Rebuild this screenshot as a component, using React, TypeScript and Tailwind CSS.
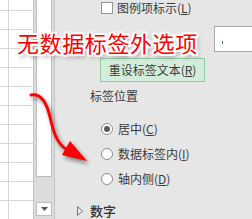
import React from "react";

const rowLines = Array.from({ length: 11 });

function Radio({ checked, children }: { checked?: boolean; children: React.ReactNode }) {
  return (
    <div className="flex items-center h-[20px] pl-[46px] gap-[5px]">
      <span className="w-[12px] h-[12px] rounded-full border border-[#8c8c8c] bg-white flex items-center justify-center">
        {checked && <span className="w-[6px] h-[6px] rounded-full bg-[#5c5c5c]" />}
      </span>
      <span className="text-[12px] leading-[16px] text-[#3c3c3c]">{children}</span>
    </div>
  );
}

export default function App() {
  return (
    <div className="relative w-[252px] h-[219px] overflow-hidden flex bg-white font-['Noto_Sans_CJK_SC',sans-serif]">
      {/* sheet grid */}
      <div className="w-[33px] shrink-0 h-full flex flex-col bg-white">
        <div className="h-[11px] border-b border-[#d6d6d6] flex shrink-0">
          <div className="w-[9px] border-r border-[#d6d6d6]" />
        </div>
        {rowLines.map((_, i) => (
          <div key={i} className="h-[19px] border-b border-[#d6d6d6] flex shrink-0">
            <div className="w-[9px] border-r border-[#d6d6d6]" />
          </div>
        ))}
      </div>

      {/* vertical scrollbar */}
      <div className="w-[22px] shrink-0 h-full border-l border-[#a8a8a8] border-r border-[#c4c4c4] bg-[#dcdcdc] px-[2px] flex flex-col">
        <div className="h-[177px] bg-white border-x border-b border-[#bdbdbd]" />
        <div className="flex-1" />
        <div className="h-[14px] mb-[3px] bg-white border border-[#bdbdbd] flex items-center justify-center">
          <svg width="7" height="4" viewBox="0 0 7 4">
            <polygon points="0,0 7,0 3.5,4" fill="#555" />
          </svg>
        </div>
      </div>

      {/* format pane */}
      <div className="flex-1 min-w-0 overflow-hidden h-full bg-[#e6e6e6] flex flex-col">
        <div className="mt-[2px] h-[12px] pl-[46px] flex items-center gap-[4px]">
          <span className="w-[12px] h-[12px] border border-[#969696] bg-white shrink-0" />
          <span className="text-[12px] leading-[16px] text-[#3c3c3c] whitespace-nowrap">
            图例项标示(<span className="underline">L</span>)
          </span>
        </div>

        <div className="mt-[12px] pl-[159px] flex">
          <div className="w-[60px] h-[26px] shrink-0 border border-[#a9a9a9] bg-white pl-[7px] pt-[14px]">
            <span className="block w-[1px] h-[3px] bg-[#3d72c9]" />
          </div>
        </div>

        <div className="mt-[6px] pl-[45px] flex">
          <div className="w-[105px] h-[24px] border border-[#93cda3] bg-[#d4ecdb] flex items-center justify-center text-[12px] text-[#3c3c3c] whitespace-nowrap">
            重设标签文本(<span className="underline">R</span>)
          </div>
        </div>

        <div className="mt-[6px] pl-[35px] text-[12px] leading-[16px] text-[#3c3c3c]">标签位置</div>

        <div className="mt-[15px] flex flex-col gap-[5px]">
          <Radio checked>
            居中(<span className="underline">C</span>)
          </Radio>
          <Radio>
            数据标签内(<span className="underline">I</span>)
          </Radio>
          <Radio>
            轴内侧(<span className="underline">D</span>)
          </Radio>
        </div>

        <div className="mt-[14px] pl-[22px] flex items-center gap-[7px] h-[16px]">
          <svg width="6" height="10" viewBox="0 0 6 10">
            <polygon points="0.5,0.5 5.5,5 0.5,9.5" fill="none" stroke="#7a7a7a" strokeWidth="1" />
          </svg>
          <span className="text-[13px] leading-[16px] font-medium text-[#333]">数字</span>
        </div>
      </div>

      {/* annotation overlay */}
      <div className="absolute left-[17px] top-[28px] text-[22px] leading-[28px] tracking-[0.6px] text-[#ff0000] whitespace-nowrap [text-shadow:-2px_-2px_0_#fff,2px_-2px_0_#fff,-2px_2px_0_#fff,2px_2px_0_#fff,0_2px_0_#fff,0_-2px_0_#fff,2px_0_0_#fff,-2px_0_0_#fff,2px_3px_4px_rgba(0,0,0,0.55)]">
        无数据标签外选项
      </div>

      <svg
        className="absolute left-0 top-0 pointer-events-none drop-shadow-[2px_3px_2px_rgba(0,0,0,0.45)]"
        width="252"
        height="219"
        viewBox="0 0 252 219"
      >
        <path
          d="M31 95 C 42 93, 47 104, 50 117 S 56 143, 67 150"
          fill="none"
          stroke="#ff0000"
          strokeWidth="3"
          strokeLinecap="round"
        />
        <polygon points="70,141 87,161 62,155" fill="#ff0000" />
      </svg>
    </div>
  );
}
